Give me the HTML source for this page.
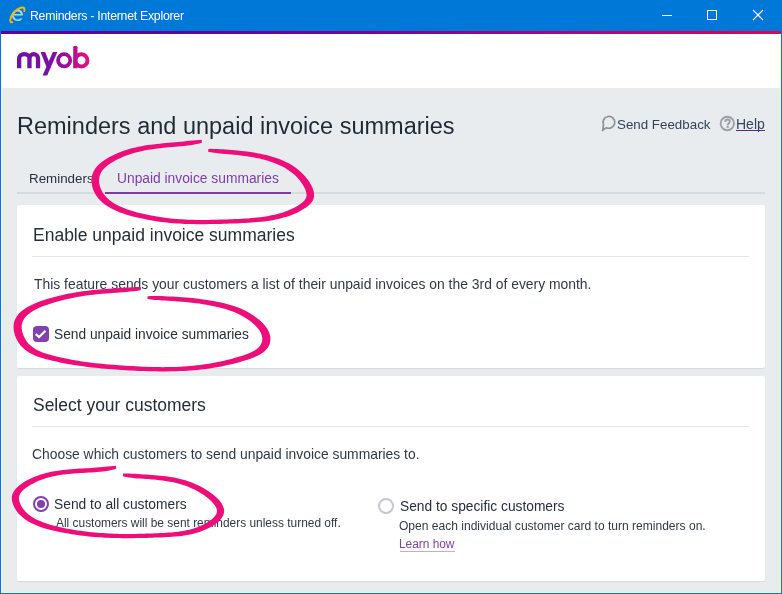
<!DOCTYPE html>
<html><head><meta charset="utf-8">
<style>
*{margin:0;padding:0;box-sizing:border-box}
html,body{width:782px;height:594px;overflow:hidden}
body{position:relative;background:#e9ecef;font-family:"Liberation Sans",sans-serif;color:#2f3a48}
.a{position:absolute;white-space:nowrap;line-height:1;will-change:transform}
#titlebar{position:absolute;left:0;top:0;width:782px;height:31px;background:#0078d7}
#bl{position:absolute;left:0;top:31px;width:1px;height:563px;background:#0078d7}
#br{position:absolute;left:781px;top:31px;width:1px;height:563px;background:#0078d7}
#bb{position:absolute;left:0;top:593px;width:782px;height:1px;background:#0078d7}
#grad{position:absolute;left:1px;top:31px;width:780px;height:3px;background:linear-gradient(90deg,#5f00a3 0%,#6b00a0 28%,#880090 51%,#b8007b 74%,#e3005b 100%)}
#hdr{position:absolute;left:1px;top:34px;width:780px;height:54px;background:#fff}
.card{position:absolute;left:17px;width:748px;background:#fff;border-radius:2px;box-shadow:0 1px 1px rgba(0,0,0,0.08)}
.div{position:absolute;left:32px;width:717px;height:1px;background:#e3e6e9}
</style></head><body>
<div id="titlebar"></div>
<svg class="a" style="left:0;top:0" width="782" height="31">
  <!-- IE icon -->
  <path d="M13.2,15.4 H22.9 C23.2,11.8 21,9.8 17.7,9.8 C14.2,9.8 12,12.4 12,15.6 C12,18.9 14.3,21 17.6,21 C19.9,21 21.6,20.1 22.6,18.4 H20.1 C19.5,19.1 18.7,19.4 17.6,19.4 C15.8,19.4 14.5,18.3 14.2,16.8 M14.3,14 C14.7,12.3 16,11.4 17.6,11.4 C19.3,11.4 20.6,12.4 20.8,14 Z" fill="#a3d9f6"/>
  <path d="M12.2,22.2 C9.8,22.6 9.6,19.8 11.4,16.3 C13.4,12.5 17.4,8.9 21,7.8 C23.4,7.1 24.8,7.6 24.4,11" fill="none" stroke="#f6b800" stroke-width="2" stroke-linecap="round"/>
  <!-- controls -->
  <rect x="662" y="15" width="10" height="1" fill="#fff"/>
  <rect x="707.5" y="10.5" width="9" height="9" fill="none" stroke="#fff" stroke-width="1"/>
  <path d="M753,10 L763,20 M763,10 L753,20" stroke="#fff" stroke-width="1.1"/>
</svg>
<div class="a" id="ttl" style="left:30px;top:9.8px;font-size:12.3px;letter-spacing:-0.26px;color:#fff">Reminders - Internet Explorer</div>
<div id="bl"></div><div class="a" style="left:1px;top:88px;width:1px;height:505px;background:#f4f5f7"></div><div class="a" style="left:780px;top:34px;width:1px;height:559px;background:#f4f5f7"></div><div class="a" style="left:1px;top:592px;width:780px;height:1px;background:#f4f5f7"></div><div id="br"></div><div id="bb"></div>
<div id="grad"></div>
<div id="hdr"></div>
<!-- myob logo -->
<svg class="a" style="left:0;top:0" width="120" height="88">
  <defs><linearGradient id="lg" x1="17" y1="0" x2="90" y2="0" gradientUnits="userSpaceOnUse">
    <stop offset="0" stop-color="#6912a9"/><stop offset="0.45" stop-color="#7d0fa6"/><stop offset="0.68" stop-color="#a00d98"/><stop offset="1" stop-color="#ea117a"/></linearGradient></defs>
  <g fill="none" stroke="url(#lg)" stroke-width="4.3">
    <path d="M19.15,68.3 V58.6 A5.15,4.45 0 0 1 29.45,58.6 V68.3 M29.45,58.6 A4.3,4.45 0 0 1 38.05,58.6 V68.3"/>
    <circle cx="64.15" cy="60.3" r="6.1" stroke-width="3.8"/>
    <circle cx="81.4" cy="60.4" r="6.1" stroke-width="3.9"/>
  </g>
  <g fill="url(#lg)">
    <path d="M40.6,52 H45.2 L51.3,67.6 H46.7 Z"/>
    <path d="M52.8,52 H57.4 L47.2,75.5 H42.6 Z"/>
    <path d="M73.2,47.2 Q73.2,46 74.4,46 H76.3 Q77.5,46 77.5,47.2 V68.3 H73.2 Z"/>
  </g>
</svg>
<div class="a" id="h1" style="left:17px;top:115px;font-size:23.5px;color:#1f2a35">Reminders and unpaid invoice summaries</div>
<svg class="a" style="left:600px;top:114px" width="20" height="20">
  <path d="M3.55,10.8 A5.9,5.9 0 1 1 6.4,13.65 L2.6,16.4 Z" fill="none" stroke="#8b9197" stroke-width="1.7" stroke-linejoin="round"/>
</svg>
<div class="a" id="sf" style="left:617px;top:117.5px;font-size:13.35px;color:#33435a">Send Feedback</div>
<svg class="a" style="left:718px;top:114px" width="20" height="20">
  <circle cx="9.3" cy="9.5" r="6.7" fill="none" stroke="#9aa0a6" stroke-width="1.9"/>
  <path d="M7.3,7.9 C7.3,6.3 8.3,5.5 9.5,5.5 C10.9,5.5 11.8,6.4 11.8,7.6 C11.8,9.2 9.7,9.4 9.7,11.3" fill="none" stroke="#9aa0a6" stroke-width="1.9"/>
  <circle cx="9.7" cy="13" r="1.15" fill="#9aa0a6"/>
</svg>
<div class="a" id="help" style="left:736px;top:117px;font-size:14px;color:#33435a">Help</div><div class="a" style="left:736px;top:130px;width:29px;height:1px;background:#5e238c"></div>
<!-- tabs -->
<div class="a" style="left:17px;top:192px;width:748px;height:2px;background:#d7dbdf"></div>
<div class="a" style="left:105px;top:192px;width:186px;height:2px;background:#7d3aa8"></div>
<div class="a" id="t1" style="left:29px;top:172px;font-size:13.37px;color:#28323c">Reminders</div>
<div class="a" id="t2" style="left:117px;top:172px;font-size:13.8px;color:#7d3ca8">Unpaid invoice summaries</div>
<!-- card 1 -->
<div class="card" style="top:205px;height:163px"></div>
<div class="div" style="top:256px"></div>
<div class="a" id="c1t" style="left:33px;top:227px;font-size:17.5px;color:#242e38">Enable unpaid invoice summaries</div>
<div class="a" id="c1p" style="left:33.8px;top:277.7px;font-size:13.9px;color:#2f3a48">This feature sends your customers a list of their unpaid invoices on the 3rd of every month.</div>
<div class="a" style="left:33px;top:326px;width:16px;height:16px;background:#8241ac;border-radius:4px"></div>
<svg class="a" style="left:33px;top:326px" width="16" height="16"><path d="M2.7,8.2 L6.1,11 L12.5,4.8" fill="none" stroke="#fff" stroke-width="2.2"/></svg>
<div class="a" id="c1c" style="left:53.8px;top:327.7px;font-size:13.76px;color:#262f3a">Send unpaid invoice summaries</div>
<!-- card 2 -->
<div class="card" style="top:376px;height:205px"></div>
<div class="div" style="top:426px"></div>
<div class="a" id="c2t" style="left:33px;top:396.7px;font-size:17.48px;color:#242e38">Select your customers</div>
<div class="a" id="c2p" style="left:32.4px;top:447.7px;font-size:13.86px;color:#2f3a48">Choose which customers to send unpaid invoice summaries to.</div>
<svg class="a" style="left:33px;top:496px" width="16" height="16"><circle cx="8" cy="8" r="7" fill="none" stroke="#8241ac" stroke-width="2"/><circle cx="8" cy="8" r="4" fill="#8241ac"/></svg>
<div class="a" id="r1" style="left:54.2px;top:497.9px;font-size:13.8px;color:#262f3a">Send to all customers</div>
<div class="a" id="r1s" style="left:55.5px;top:518.3px;font-size:11.93px;color:#2f3a48">All customers will be sent reminders unless turned off.</div>
<svg class="a" style="left:378px;top:498px" width="16" height="16"><circle cx="8" cy="8" r="7" fill="none" stroke="#c5c9cd" stroke-width="2"/></svg>
<div class="a" id="r2" style="left:399.7px;top:499.7px;font-size:13.77px;color:#262f3a">Send to specific customers</div>
<div class="a" id="r2s" style="left:399.3px;top:519.6px;font-size:12.06px;color:#2f3a48">Open each individual customer card to turn reminders on.</div>
<div class="a" id="lh" style="left:399.3px;top:538.5px;font-size:11.87px;color:#8241aa">Learn how</div><div class="a" style="left:400px;top:551px;width:55px;height:1px;background:#c9a6dd"></div>
<!-- pink annotations -->
<svg class="a" style="left:0;top:0" width="782" height="594"><g fill="#ee0e7a"><path d="M201.5,139.8 L199.1,139.9 L195.9,140.2 L192.7,140.5 L189.5,140.8 L187.1,141.0 L183.9,141.4 L180.7,141.7 L177.5,142.0 L175.1,142.3 L171.9,142.5 L168.7,142.8 L165.5,143.1 L163.1,143.3 L159.8,143.7 L156.6,144.0 L153.4,144.4 L150.2,144.8 L147.8,145.1 L144.6,145.6 L141.4,146.2 L138.2,146.8 L135.7,147.4 L132.5,148.1 L129.3,149.0 L126.1,150.0 L123.7,150.8 L120.5,152.0 L117.3,153.3 L114.1,154.7 L110.9,156.3 L108.5,157.6 L105.4,159.4 L102.4,161.5 L99.6,163.7 L97.7,165.6 L95.4,168.3 L93.5,171.4 L92.2,174.8 L91.7,177.5 L91.5,181.0 L91.9,184.5 L92.6,187.9 L93.5,190.4 L95.0,193.5 L96.7,196.3 L98.8,198.9 L101.1,201.3 L102.9,202.9 L105.6,204.9 L108.4,206.8 L111.3,208.5 L113.6,209.6 L116.7,211.1 L120.0,212.4 L123.3,213.6 L125.8,214.4 L129.2,215.5 L132.7,216.4 L136.1,217.3 L139.6,218.1 L142.1,218.6 L145.5,219.3 L148.9,220.0 L152.2,220.6 L154.7,221.0 L157.9,221.4 L161.2,221.9 L164.4,222.3 L166.8,222.6 L170.0,222.9 L173.2,223.2 L176.3,223.4 L179.5,223.6 L181.8,223.7 L185.0,223.9 L188.1,224.0 L191.2,224.1 L193.5,224.1 L196.7,224.2 L199.8,224.2 L202.9,224.2 L205.2,224.2 L208.4,224.1 L211.5,224.1 L214.7,224.0 L217.1,224.0 L220.3,223.9 L223.5,223.8 L226.7,223.7 L230.0,223.6 L232.4,223.5 L235.7,223.4 L239.1,223.3 L242.4,223.1 L245.0,223.0 L248.3,222.8 L251.7,222.6 L255.1,222.3 L257.7,222.1 L261.1,221.8 L264.5,221.4 L267.8,220.9 L271.2,220.4 L273.7,219.9 L277.0,219.2 L280.3,218.5 L283.5,217.6 L286.0,216.9 L289.2,215.9 L292.3,214.7 L295.4,213.4 L297.7,212.4 L300.6,210.8 L303.6,209.1 L306.4,207.3 L309.1,205.1 L310.9,203.3 L312.9,200.4 L314.0,196.9 L314.0,193.2 L313.5,190.6 L312.3,187.2 L310.6,184.0 L308.8,181.0 L307.2,178.9 L305.0,176.2 L302.7,173.7 L300.3,171.4 L298.3,169.7 L295.7,167.7 L292.9,165.8 L290.1,164.1 L287.1,162.5 L284.9,161.4 L281.8,160.1 L278.7,158.8 L275.5,157.7 L273.1,156.9 L269.8,156.0 L266.5,155.1 L263.1,154.4 L260.6,153.8 L257.2,153.2 L253.9,152.6 L250.5,152.1 L247.1,151.6 L244.5,151.3 L241.2,150.9 L237.8,150.6 L234.5,150.3 L232.0,150.1 L228.8,149.8 L225.6,149.5 L222.4,149.3 L220.1,149.2 L217.1,149.0 L214.1,148.9 L211.2,148.8 L208.4,148.9 L208.1,151.7 L210.9,152.3 L213.8,152.8 L216.7,153.1 L219.8,153.5 L222.1,153.7 L225.2,154.0 L228.4,154.3 L231.6,154.6 L234.1,154.8 L237.4,155.1 L240.7,155.5 L244.0,155.9 L246.5,156.3 L249.8,156.8 L253.1,157.3 L256.3,157.9 L259.6,158.6 L262.0,159.2 L265.2,160.0 L268.4,160.9 L271.4,161.9 L273.7,162.7 L276.7,163.9 L279.6,165.2 L282.3,166.5 L284.4,167.6 L287.0,169.2 L289.5,170.9 L291.9,172.7 L294.2,174.6 L295.8,176.1 L297.9,178.3 L299.8,180.5 L301.6,183.0 L302.9,184.9 L304.3,187.5 L305.5,190.0 L306.2,192.5 L306.5,194.1 L306.5,195.9 L306.2,197.4 L305.4,199.1 L304.4,200.5 L302.6,202.3 L300.3,204.1 L297.7,205.7 L295.1,207.2 L293.0,208.3 L290.2,209.6 L287.3,210.8 L284.3,211.9 L282.1,212.7 L279.0,213.6 L275.9,214.4 L272.7,215.1 L270.3,215.6 L267.1,216.2 L263.8,216.7 L260.5,217.2 L257.2,217.6 L254.7,217.8 L251.4,218.1 L248.1,218.4 L244.7,218.6 L242.2,218.8 L238.9,218.9 L235.6,219.1 L232.3,219.2 L229.8,219.3 L226.6,219.4 L223.3,219.5 L220.1,219.6 L217.0,219.7 L214.6,219.8 L211.4,219.8 L208.3,219.9 L205.2,219.9 L202.9,220.0 L199.8,220.0 L196.7,219.9 L193.6,219.8 L191.3,219.8 L188.2,219.7 L185.2,219.5 L182.1,219.3 L179.8,219.2 L176.7,219.0 L173.6,218.7 L170.5,218.4 L167.3,218.0 L165.0,217.7 L161.8,217.3 L158.6,216.8 L155.4,216.3 L153.0,215.8 L149.8,215.2 L146.5,214.5 L143.2,213.8 L140.7,213.2 L137.3,212.4 L134.0,211.5 L130.7,210.5 L127.5,209.4 L125.1,208.6 L122.0,207.3 L119.1,206.0 L116.2,204.5 L114.2,203.4 L111.7,201.7 L109.3,199.9 L107.2,198.1 L105.8,196.6 L104.1,194.6 L102.6,192.4 L101.4,190.1 L100.4,187.8 L99.8,185.9 L99.3,183.4 L99.1,180.8 L99.2,178.4 L99.5,176.6 L100.2,174.4 L101.2,172.2 L102.7,170.0 L104.1,168.5 L106.3,166.4 L108.8,164.5 L111.5,162.7 L113.7,161.4 L116.6,159.8 L119.6,158.4 L122.5,157.1 L125.5,155.8 L127.8,155.0 L130.8,154.0 L133.9,153.1 L136.9,152.2 L139.2,151.7 L142.3,151.0 L145.4,150.3 L148.5,149.8 L150.9,149.4 L154.0,149.0 L157.2,148.6 L160.3,148.2 L163.5,147.8 L165.9,147.6 L169.1,147.3 L172.3,147.0 L175.5,146.7 L177.9,146.5 L181.1,146.2 L184.3,145.9 L187.6,145.6 L190.0,145.2 L193.2,144.7 L196.5,144.1 L199.7,143.4 L202.0,142.6Z"/><path d="M140.6,287.2 L137.6,287.1 L133.6,287.3 L129.8,287.4 L126.0,287.6 L123.2,287.8 L119.5,288.0 L115.9,288.3 L112.3,288.5 L109.6,288.7 L106.0,289.0 L102.5,289.2 L99.0,289.5 L96.4,289.8 L92.9,290.1 L89.4,290.5 L86.0,290.9 L82.5,291.3 L79.8,291.7 L76.3,292.3 L72.8,292.9 L69.2,293.5 L66.5,294.1 L62.8,294.9 L59.1,295.7 L55.4,296.7 L52.6,297.4 L48.7,298.6 L44.8,299.8 L40.9,301.1 L37.0,302.5 L34.2,303.7 L30.5,305.4 L27.0,307.3 L23.7,309.4 L21.4,311.2 L18.7,313.8 L16.4,316.9 L14.6,320.3 L13.8,323.2 L13.5,327.3 L13.9,331.4 L15.0,335.4 L16.1,338.3 L18.1,342.0 L20.6,345.4 L23.4,348.3 L26.4,350.8 L28.9,352.4 L32.3,354.3 L35.8,355.9 L39.5,357.2 L42.2,358.1 L46.0,359.2 L49.7,360.1 L53.4,361.0 L56.2,361.6 L59.9,362.4 L63.7,363.2 L67.4,363.9 L71.1,364.5 L73.8,365.0 L77.5,365.5 L81.2,366.1 L84.9,366.6 L87.6,366.9 L91.3,367.4 L95.0,367.8 L98.6,368.1 L101.3,368.4 L105.0,368.7 L108.6,369.0 L112.3,369.3 L115.9,369.6 L118.6,369.7 L122.2,370.0 L125.9,370.2 L129.5,370.4 L132.2,370.5 L135.8,370.7 L139.4,370.9 L143.0,371.0 L145.7,371.1 L149.3,371.2 L152.9,371.3 L156.5,371.3 L159.2,371.4 L162.8,371.4 L166.4,371.4 L170.1,371.3 L173.7,371.3 L176.4,371.2 L180.0,371.1 L183.7,370.9 L187.3,370.7 L190.0,370.5 L193.7,370.2 L197.4,369.9 L201.0,369.5 L203.8,369.2 L207.5,368.7 L211.2,368.2 L214.9,367.6 L218.6,366.9 L221.4,366.4 L225.2,365.6 L228.9,364.8 L232.7,363.9 L235.5,363.2 L239.3,362.2 L243.1,361.1 L246.9,359.9 L249.8,359.0 L253.5,357.6 L257.0,356.0 L260.4,354.2 L263.5,352.2 L265.6,350.3 L268.0,347.4 L269.7,344.0 L270.4,340.0 L270.3,336.8 L269.3,332.7 L267.3,328.7 L264.7,325.2 L262.5,322.8 L259.4,319.9 L256.1,317.4 L252.8,315.0 L250.3,313.4 L246.9,311.5 L243.5,309.8 L240.1,308.3 L236.6,307.0 L234.0,306.1 L230.4,305.0 L226.9,304.0 L223.4,303.1 L220.7,302.5 L217.1,301.8 L213.5,301.1 L209.9,300.4 L207.1,300.0 L203.5,299.4 L199.8,299.0 L196.1,298.5 L192.5,298.1 L189.7,297.8 L186.0,297.5 L182.3,297.2 L178.6,297.0 L175.9,296.8 L172.2,296.6 L168.5,296.4 L164.8,296.2 L162.1,296.1 L158.4,296.1 L154.8,296.0 L151.2,296.1 L147.6,296.3 L147.5,299.1 L151.0,299.6 L154.6,299.9 L158.3,300.1 L161.9,300.4 L164.6,300.6 L168.3,300.8 L171.9,301.0 L175.6,301.2 L178.3,301.4 L182.0,301.7 L185.6,302.0 L189.2,302.4 L192.0,302.7 L195.6,303.2 L199.2,303.6 L202.8,304.2 L206.4,304.8 L209.0,305.3 L212.5,305.9 L216.0,306.7 L219.5,307.5 L222.1,308.2 L225.5,309.1 L228.8,310.2 L232.1,311.3 L234.6,312.3 L237.8,313.7 L240.9,315.2 L243.9,316.9 L246.9,318.8 L249.1,320.3 L252.0,322.6 L254.8,325.1 L257.3,327.7 L259.0,329.8 L260.7,332.5 L261.7,335.2 L262.2,337.8 L262.3,339.6 L262.0,341.7 L261.3,343.6 L260.2,345.6 L259.0,347.0 L256.8,348.9 L254.2,350.7 L251.2,352.3 L247.8,353.7 L245.2,354.7 L241.5,355.9 L237.8,357.1 L234.2,358.1 L231.4,358.9 L227.7,359.8 L224.1,360.7 L220.4,361.5 L217.7,362.1 L214.0,362.8 L210.4,363.4 L206.8,364.0 L203.2,364.5 L200.5,364.9 L196.9,365.3 L193.3,365.7 L189.7,366.0 L187.0,366.2 L183.4,366.5 L179.8,366.7 L176.2,366.9 L173.6,367.0 L170.0,367.1 L166.4,367.1 L162.8,367.2 L159.3,367.1 L156.6,367.1 L153.0,367.0 L149.4,366.9 L145.8,366.8 L143.2,366.7 L139.6,366.5 L136.0,366.3 L132.4,366.1 L129.7,366.0 L126.1,365.8 L122.5,365.5 L118.9,365.3 L116.2,365.1 L112.6,364.8 L109.0,364.5 L105.4,364.2 L101.8,363.8 L99.1,363.6 L95.5,363.2 L91.8,362.7 L88.2,362.3 L85.5,361.9 L81.9,361.4 L78.3,360.8 L74.6,360.2 L71.9,359.7 L68.3,359.0 L64.6,358.3 L61.0,357.5 L57.4,356.7 L54.6,356.0 L51.0,355.1 L47.4,354.1 L43.9,352.9 L41.4,352.0 L38.2,350.6 L35.2,348.9 L32.5,347.1 L30.6,345.6 L28.3,343.4 L26.4,340.9 L24.7,338.1 L23.4,335.2 L22.6,332.9 L21.9,330.0 L21.7,327.2 L21.8,324.6 L22.2,322.9 L23.0,320.7 L24.3,318.4 L26.1,316.3 L27.8,314.7 L30.4,312.7 L33.4,310.8 L36.6,309.0 L39.2,307.8 L42.8,306.3 L46.5,304.9 L50.3,303.7 L54.0,302.5 L56.8,301.7 L60.4,300.7 L64.0,299.8 L67.6,299.0 L70.2,298.4 L73.7,297.7 L77.1,297.1 L80.6,296.5 L83.1,296.1 L86.6,295.6 L90.0,295.1 L93.4,294.7 L96.9,294.3 L99.4,294.1 L102.9,293.8 L106.4,293.5 L109.9,293.2 L112.6,293.0 L116.2,292.7 L119.8,292.5 L123.5,292.2 L126.3,292.0 L130.1,291.6 L134.0,291.2 L137.9,290.7 L140.9,290.0Z"/><path d="M115.8,465.8 L113.5,465.9 L110.6,466.2 L107.7,466.5 L104.8,466.8 L102.5,467.0 L99.6,467.3 L96.6,467.6 L93.7,467.8 L91.4,468.0 L88.4,468.2 L85.4,468.3 L82.4,468.5 L80.1,468.6 L77.1,468.8 L74.0,469.0 L71.0,469.2 L67.9,469.5 L65.7,469.7 L62.6,470.0 L59.6,470.4 L56.5,470.9 L54.2,471.3 L51.2,471.8 L48.1,472.5 L45.1,473.2 L42.8,473.9 L39.8,474.8 L36.8,475.9 L33.8,477.1 L30.8,478.4 L28.6,479.5 L25.6,481.1 L22.7,482.9 L20.0,484.8 L18.0,486.4 L15.7,488.7 L13.7,491.4 L12.3,494.5 L11.8,497.1 L11.9,500.5 L12.8,503.7 L14.0,506.7 L15.1,508.7 L16.7,511.3 L18.6,513.7 L20.8,515.8 L23.1,517.8 L24.9,519.2 L27.4,520.9 L30.1,522.4 L32.9,523.8 L35.1,524.8 L38.0,526.0 L41.1,527.2 L44.2,528.2 L46.6,528.9 L49.8,529.8 L53.0,530.6 L56.2,531.3 L59.5,532.0 L61.9,532.5 L65.1,533.1 L68.3,533.6 L71.5,534.2 L73.9,534.5 L77.0,535.0 L80.1,535.4 L83.1,535.8 L85.4,536.1 L88.4,536.4 L91.4,536.7 L94.4,536.9 L97.4,537.2 L99.6,537.3 L102.6,537.5 L105.5,537.7 L108.4,537.8 L110.6,537.9 L113.5,538.0 L116.5,538.1 L119.4,538.1 L121.5,538.2 L124.4,538.2 L127.4,538.2 L130.3,538.2 L132.5,538.2 L135.4,538.1 L138.3,538.1 L141.2,538.0 L144.2,538.0 L146.4,537.9 L149.4,537.8 L152.3,537.7 L155.4,537.6 L157.6,537.5 L160.7,537.4 L163.7,537.2 L166.8,537.1 L169.1,537.0 L172.2,536.8 L175.4,536.5 L178.5,536.2 L181.7,535.9 L184.0,535.5 L187.2,535.0 L190.3,534.4 L193.4,533.7 L195.8,533.1 L198.9,532.2 L202.0,531.1 L205.0,529.8 L207.3,528.8 L210.3,527.3 L213.2,525.6 L215.9,523.7 L218.5,521.6 L220.2,520.0 L222.1,517.5 L223.6,514.6 L224.2,511.4 L224.0,509.0 L223.0,506.0 L221.5,503.2 L219.5,500.6 L217.8,498.8 L215.4,496.5 L212.7,494.3 L209.9,492.2 L207.8,490.7 L204.9,488.9 L202.0,487.3 L199.1,485.8 L196.2,484.4 L194.1,483.4 L191.1,482.3 L188.2,481.2 L185.3,480.3 L183.1,479.7 L180.1,478.9 L177.2,478.2 L174.2,477.6 L172.0,477.2 L169.0,476.8 L166.1,476.3 L163.1,476.0 L160.1,475.7 L157.9,475.4 L154.9,475.2 L151.9,474.9 L148.9,474.7 L146.6,474.6 L143.6,474.4 L140.6,474.2 L137.6,474.0 L135.3,473.8 L132.3,473.7 L129.2,473.6 L126.2,473.4 L123.1,473.5 L122.8,476.3 L125.8,477.0 L128.9,477.5 L132.0,477.8 L135.0,478.2 L137.3,478.4 L140.3,478.6 L143.3,478.8 L146.3,479.0 L148.6,479.1 L151.5,479.4 L154.5,479.6 L157.4,479.9 L159.6,480.2 L162.5,480.5 L165.4,480.9 L168.3,481.4 L171.2,481.9 L173.3,482.3 L176.1,483.0 L178.9,483.7 L181.7,484.5 L183.7,485.2 L186.5,486.1 L189.2,487.2 L191.9,488.4 L193.9,489.3 L196.6,490.7 L199.2,492.2 L201.8,493.8 L204.5,495.6 L206.4,497.0 L208.9,499.0 L211.1,501.1 L213.1,503.2 L214.4,504.7 L215.7,506.7 L216.6,508.6 L216.9,510.2 L217.0,511.2 L216.8,512.5 L216.3,514.0 L215.2,515.8 L214.1,517.1 L212.2,518.9 L209.9,520.7 L207.4,522.3 L204.8,523.8 L202.7,524.9 L200.0,526.1 L197.2,527.3 L194.3,528.2 L192.2,528.9 L189.2,529.7 L186.3,530.3 L183.3,530.9 L181.0,531.3 L178.0,531.7 L175.0,532.1 L171.9,532.4 L168.9,532.6 L166.6,532.7 L163.5,532.9 L160.5,533.1 L157.4,533.2 L155.2,533.3 L152.2,533.4 L149.2,533.5 L146.3,533.6 L144.1,533.7 L141.1,533.8 L138.2,533.8 L135.3,533.9 L132.4,533.9 L130.2,534.0 L127.4,534.0 L124.5,534.0 L121.6,533.9 L119.4,533.9 L116.6,533.8 L113.7,533.7 L110.8,533.6 L108.6,533.5 L105.8,533.3 L102.9,533.1 L99.9,532.9 L97.8,532.8 L94.8,532.5 L91.9,532.2 L88.9,531.9 L85.9,531.5 L83.7,531.2 L80.7,530.8 L77.6,530.4 L74.6,529.9 L72.3,529.5 L69.1,529.0 L66.0,528.4 L62.9,527.8 L60.5,527.3 L57.3,526.6 L54.2,525.8 L51.1,524.9 L48.0,524.0 L45.8,523.3 L42.9,522.2 L40.1,521.1 L37.4,519.9 L35.4,518.9 L32.9,517.5 L30.6,516.0 L28.5,514.4 L27.0,513.1 L25.2,511.3 L23.6,509.5 L22.2,507.5 L21.0,505.4 L20.3,503.8 L19.5,501.6 L19.0,499.5 L18.9,497.6 L19.1,496.4 L19.7,494.7 L20.8,492.8 L22.3,490.9 L23.8,489.5 L26.1,487.7 L28.6,486.0 L31.2,484.5 L33.3,483.4 L36.0,482.0 L38.7,480.8 L41.5,479.7 L44.3,478.7 L46.5,478.1 L49.3,477.3 L52.2,476.6 L55.1,475.9 L57.3,475.5 L60.2,475.0 L63.2,474.6 L66.1,474.2 L68.4,474.0 L71.4,473.7 L74.4,473.4 L77.4,473.2 L80.4,473.0 L82.6,472.9 L85.7,472.7 L88.7,472.5 L91.7,472.4 L94.0,472.2 L97.0,472.0 L100.0,471.8 L103.0,471.5 L105.3,471.2 L108.3,470.7 L111.2,470.1 L114.2,469.4 L116.3,468.6Z"/></g></svg>
</body></html>
